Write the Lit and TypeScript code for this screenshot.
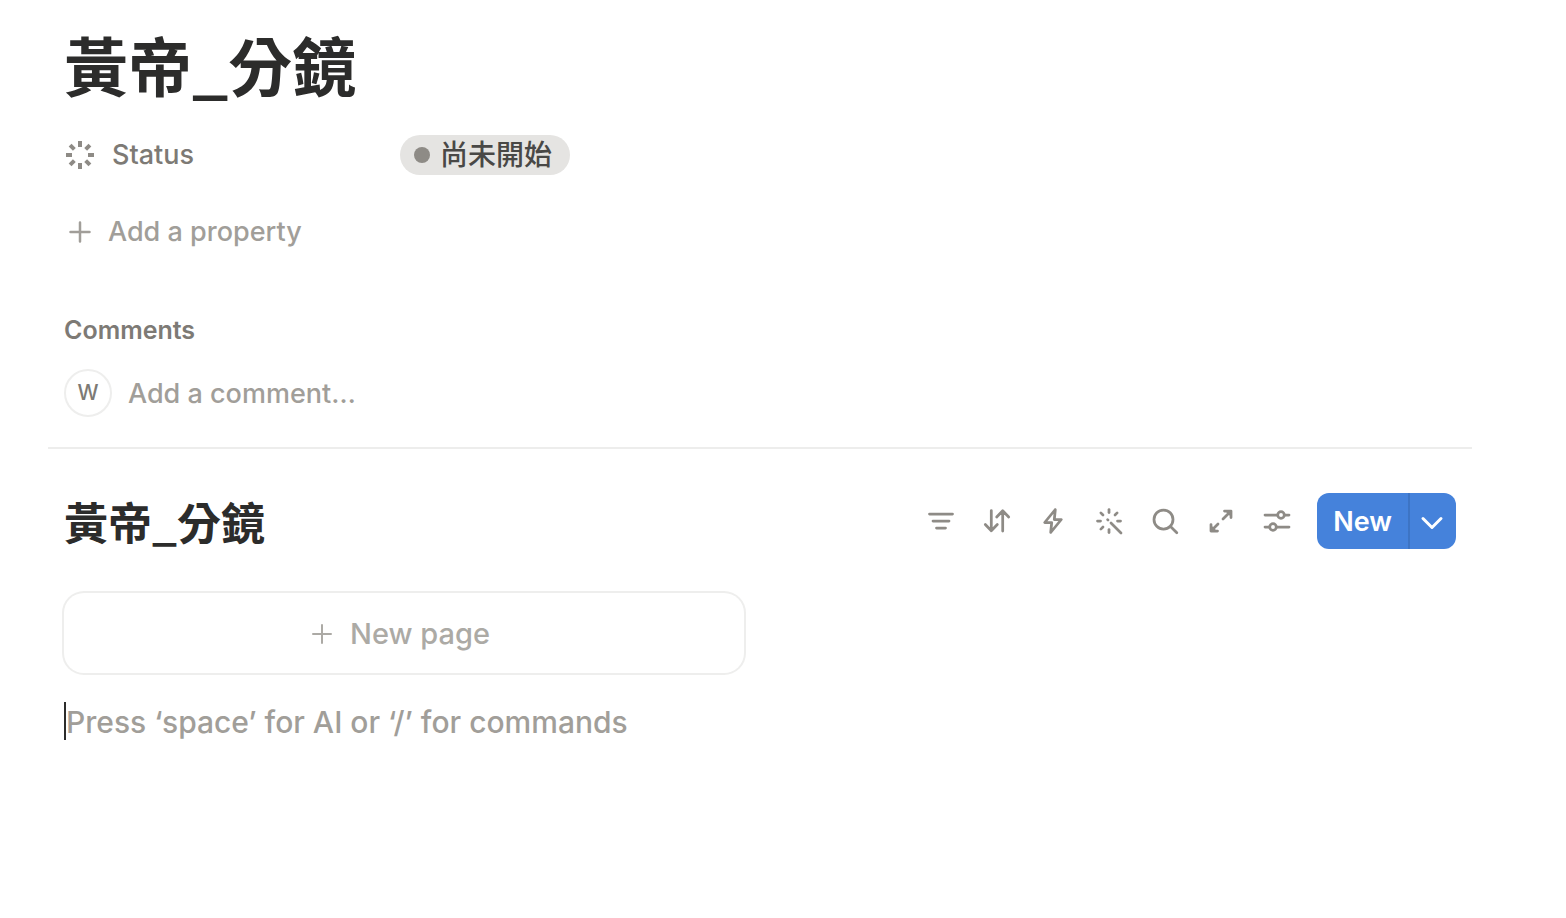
import { LitElement, html, css, svg } from "lit";
import { customElement } from "lit/decorators.js";

const icon = (body: unknown, size = 32) =>
  html`<svg class="icon" width=${size} height=${size} viewBox="0 0 ${size} ${size}" aria-hidden="true">${body}</svg>`;

const rays = (cx: number, cy: number, inner: number, outer: number, skip = -1) =>
  [0, 1, 2, 3, 4, 5, 6, 7]
    .filter((i) => i !== skip)
    .map((i) => {
      const a = (i * Math.PI) / 4;
      const c = Math.cos(a);
      const s = Math.sin(a);
      return svg`<line x1=${cx + c * inner} y1=${cy + s * inner} x2=${cx + c * outer} y2=${cy + s * outer} />`;
    });

const TOOLS = [
  { label: "Filter", body: svg`<path d="M4.500 9H27.500M8 16H24M11.500 23H20.500" />` },
  {
    label: "Sort",
    body: svg`<path d="M10.300 5.500V25.500M4.300 19.500L10.300 25.700L16.300 19.500M21.700 26V6M15.700 12L21.700 5.800L27.700 12" />`,
  },
  {
    label: "Automations",
    body: svg`<path d="M18.300 4.500L7.700 17.500H14.700L13.700 27.500L24.300 14.500H17.300Z" />`,
  },
  {
    label: "Autofill",
    body: svg`${rays(16, 16, 8.5, 11.5, 1)}<path d="M14.600 14.600L15 15M18 18L28 28" />`,
  },
  { label: "Search", body: svg`<circle cx="14.500" cy="14.500" r="9.500" /><path d="M21.500 21.500L27.800 27.800" />` },
  {
    label: "Open as full page",
    body: svg`<path d="M18 14L25 7M19.500 6H26V12.500M13 19L6 26M6 19.500V26H12.500" /><path d="M22.500 6.500L25.500 9.500M6.500 22.500L9.500 25.500" />`,
  },
  {
    label: "View settings",
    body: svg`<path d="M4 10H16.500M23.500 10H28M4 22H8.500M15.500 22H28" /><circle cx="20" cy="10" r="3.300" /><circle cx="12" cy="22" r="3.300" />`,
  },
];

@customElement("app-root")
export class AppRoot extends LitElement {
  static styles = css`
    :host {
      display: block;
      color: #2c2c2b;
      background: #fff;
      font-family: Inter, "Noto Sans CJK TC", sans-serif;
      font-size: 27px;
      font-weight: 450;
      line-height: 40px;
    }
    * {
      box-sizing: border-box;
    }
    button,
    input {
      font: inherit;
      color: inherit;
      background: none;
      border: 0;
      padding: 0;
      margin: 0;
      outline: 0;
    }
    button {
      cursor: pointer;
    }
    .page {
      padding: 19px 94px 48px 48px;
    }
    .head,
    .body {
      padding: 0 16px;
    }
    h1,
    h2,
    h3 {
      margin: 0;
      font-weight: 700;
    }
    .title,
    .view {
      font-family: "Noto Sans CJK TC", sans-serif;
    }
    .title {
      font-size: 64px;
      line-height: 88px;
    }
    .icon {
      display: block;
      flex: none;
      fill: none;
      stroke: currentColor;
      stroke-width: 2.5;
      stroke-linecap: round;
      stroke-linejoin: round;
    }
    .props {
      margin: 28px 0 0;
      display: grid;
      grid-template-columns: 336px 1fr;
    }
    .name {
      display: flex;
      align-items: center;
      gap: 16px;
      color: #7d7a75;
    }
    .name .icon {
      stroke: #8e8b86;
      stroke-width: 4;
      stroke-linecap: butt;
    }
    .value {
      margin: 0;
    }
    .pill {
      display: flex;
      width: fit-content;
      align-items: center;
      gap: 10px;
      height: 40px;
      padding: 0 18px 0 14px;
      border-radius: 20px;
      background: #e5e4e2;
      color: #494846;
      font-size: 28px;
    }
    .dot {
      width: 16px;
      height: 16px;
      border-radius: 50%;
      background: #8e8b86;
    }
    .add {
      display: flex;
      align-items: center;
      gap: 12px;
      margin-top: 37px;
      color: #a19e99;
    }
    .comments {
      margin-top: 58px;
      font-size: 25px;
      font-weight: 600;
      color: #7d7a75;
    }
    .comment {
      display: flex;
      align-items: center;
      gap: 16px;
      margin-top: 19px;
    }
    .avatar {
      display: grid;
      place-items: center;
      width: 48px;
      height: 48px;
      border: 2px solid #eeeeed;
      border-radius: 50%;
      font-size: 21px;
      color: #7d7a75;
    }
    input {
      flex: 1;
      min-width: 0;
      padding-top: 2px;
    }
    input::placeholder {
      color: #a19e99;
      opacity: 1;
    }
    hr {
      height: 2px;
      margin: 30px 0 44px;
      border: 0;
      background: #ededec;
    }
    .bar {
      display: flex;
      align-items: center;
      justify-content: space-between;
    }
    .view {
      font-size: 44px;
      line-height: 56px;
    }
    .tools {
      display: flex;
      align-items: center;
    }
    .tool {
      display: grid;
      place-items: center;
      width: 56px;
      height: 56px;
      color: #8e8b86;
    }
    .tool .icon {
      stroke-width: 2.75;
    }
    .split {
      display: flex;
      height: 56px;
      margin-left: 12px;
      border-radius: 12px;
      overflow: hidden;
      background: #4582db;
      color: #fff;
    }
    .new {
      padding: 2px 16px 0;
      font-weight: 600;
    }
    .more {
      display: grid;
      place-items: center;
      width: 48px;
      border-left: 2px solid #3d74c4;
    }
    .cards {
      display: grid;
      grid-template-columns: 1fr 1fr;
      gap: 32px;
      margin-top: 44px;
    }
    .card {
      display: flex;
      align-items: center;
      justify-content: center;
      gap: 12px;
      height: 80px;
      padding: 2px 12px 0 0;
      border-radius: 20px;
      box-shadow: 0 0 0 2px #eeeeed;
      font-size: 29px;
      color: #acaaa5;
    }
    .card .icon {
      stroke-width: 2;
    }
    .block {
      display: flex;
      margin-top: 29px;
      border-left: 2px solid #2c2c2b;
      font-size: 30px;
      line-height: 38px;
    }
    .block input {
      height: 38px;
    }
  `;

  render() {
    return html`
      <main class="page">
        <header class="head">
          <h1 class="title">黃帝_分鏡</h1>
          <dl class="props">
            <dt class="name">${icon(rays(16, 16, 8, 14))}Status</dt>
            <dd class="value"><button class="pill"><span class="dot"></span>尚未開始</button></dd>
          </dl>
          <button class="add">${icon(svg`<path d="M6.500 16H25.500M16 6.500V25.500" />`)}Add a property</button>
          <h3 class="comments">Comments</h3>
          <div class="comment">
            <span class="avatar">W</span>
            <input aria-label="Add a comment" placeholder="Add a comment…" />
          </div>
        </header>
        <hr />
        <section class="body">
          <div class="bar">
            <h2 class="view">黃帝_分鏡</h2>
            <div class="tools">
              ${TOOLS.map((t) => html`<button class="tool" aria-label=${t.label}>${icon(t.body)}</button>`)}
              <div class="split">
                <button class="new">New</button>
                <button class="more" aria-label="More options">
                  ${icon(svg`<path stroke-width="3" d="M6 13.500L15 22.500L24 13.500" />`)}
                </button>
              </div>
            </div>
          </div>
          <div class="cards">
            <button class="card">${icon(svg`<path d="M7 16H25M16 7V25" />`)}New page</button>
          </div>
          <div class="block">
            <input aria-label="Text block" placeholder="Press ‘space’ for AI or ‘/’ for commands" />
          </div>
        </section>
      </main>
    `;
  }
}
